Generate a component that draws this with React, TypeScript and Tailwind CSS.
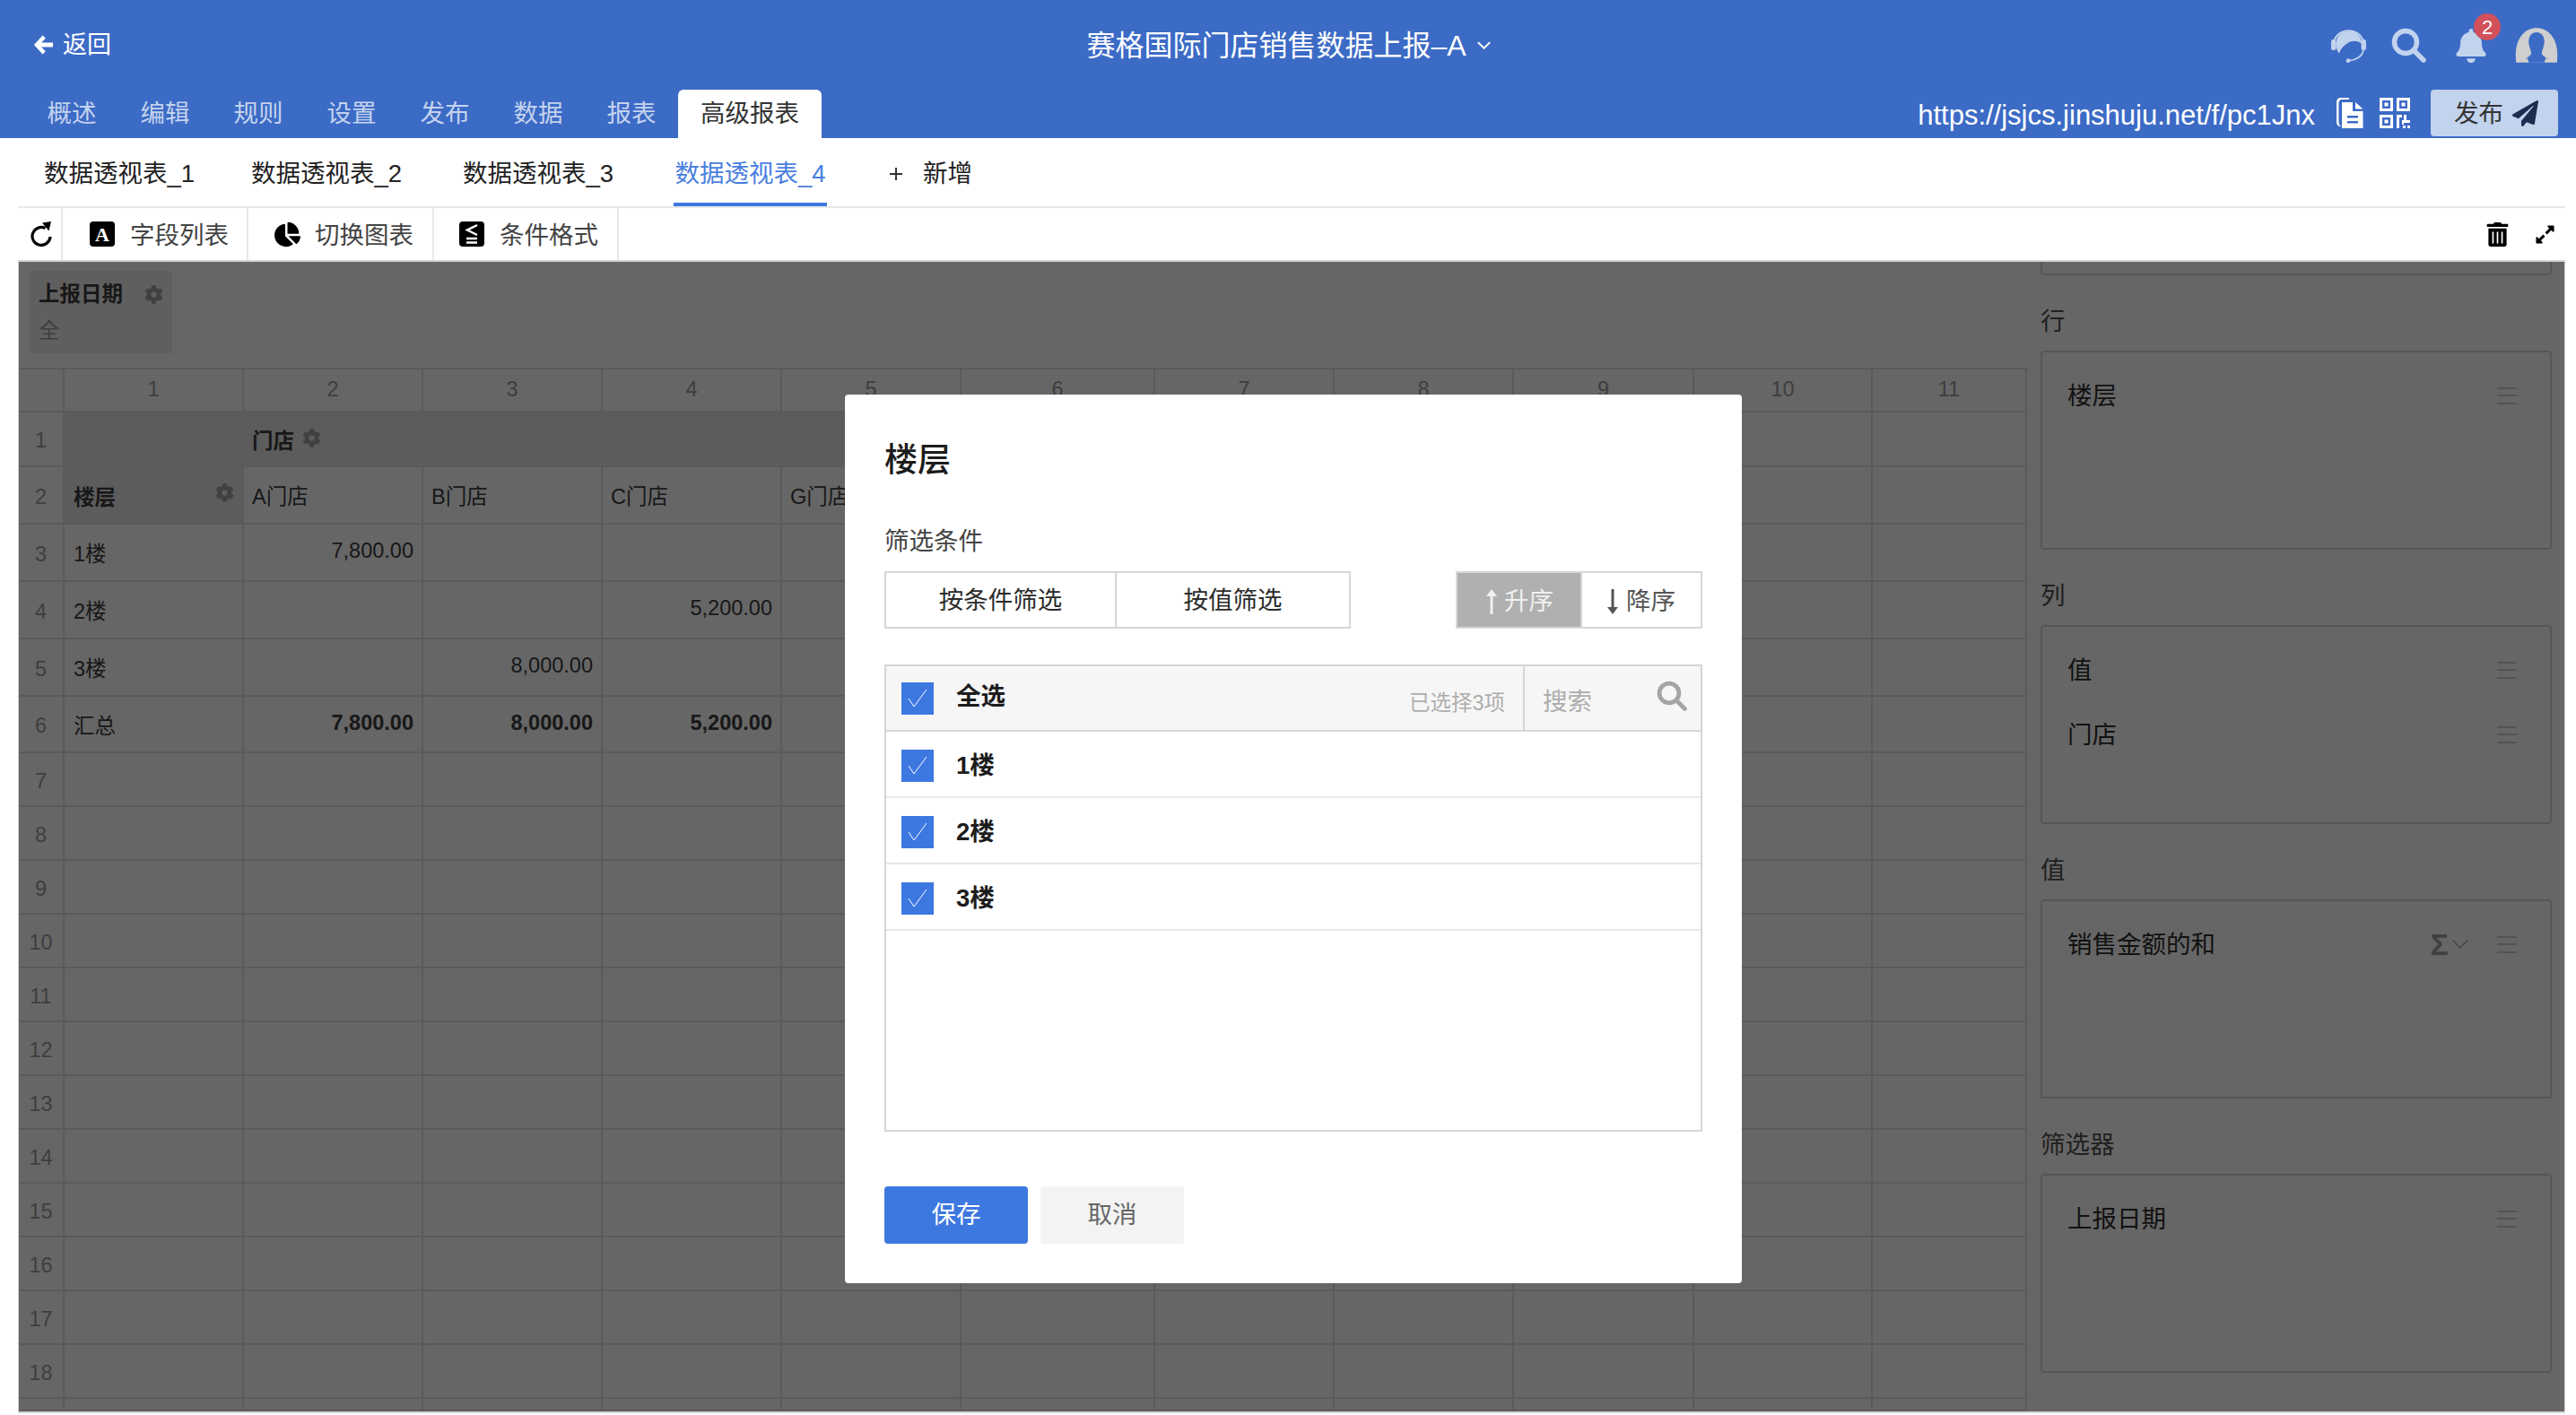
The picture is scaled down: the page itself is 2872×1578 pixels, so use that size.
import React from "react";
import { FaChartPie, FaTrashAlt, FaExpandAlt, FaBell, FaPaperPlane, FaCog } from "react-icons/fa";

const FONT = 'font-["Liberation_Sans","Noto_Sans_CJK_SC",sans-serif]';

function Magnifier({ className }: { className: string }) {
  return (
    <svg viewBox="0 0 39 39" className={className} fill="none" stroke="currentColor" strokeWidth="5.5" strokeLinecap="round">
      <circle cx="16" cy="16" r="12.5" />
      <line x1="25.5" y1="25.5" x2="36" y2="36" />
    </svg>
  );
}

function BackArrow() {
  return (
    <svg viewBox="0 0 24 24" className="w-[23px] h-[24px]" fill="#fff">
      <path d="M11 1 L1 12 L11 23 L14.5 19.5 L9.5 14.5 H23 V9.5 H9.5 L14.5 4.5 Z" />
    </svg>
  );
}

function Refresh() {
  return (
    <svg viewBox="0 0 24 28" className="w-[24px] h-[28px]">
      <path d="M16.5 7.5 A10 10 0 1 0 22 17" fill="none" stroke="#000" strokeWidth="3.2" />
      <path d="M13 1.5 L23 0 L20.5 10.5 Z" fill="#000" />
    </svg>
  );
}

function Headset() {
  return (
    <svg viewBox="0 0 115 115" className="w-[39px] h-[39px] text-[#c2d3ee]" fill="currentColor">
      <path d="M9 48 A49 45 0 0 1 106 48" fill="none" stroke="currentColor" strokeWidth="6" />
      <path d="M16 50 C18 22 40 12 58 12 C82 12 100 28 101 52 C88 42 70 40 54 50 C42 58 32 68 26 84 C18 74 14 62 16 50 Z" />
      <rect x="0" y="38" width="16" height="36" rx="7" />
      <rect x="99" y="38" width="16" height="36" rx="7" />
      <path d="M106 72 C104 94 82 106 60 108" fill="none" stroke="currentColor" strokeWidth="5" />
      <circle cx="56" cy="108" r="7" />
    </svg>
  );
}

function Avatar() {
  return (
    <svg viewBox="0 0 144 115" className="w-[48px] h-[39px]">
      <path d="M4 115 C-6 40 30 0 72 0 C114 0 150 40 140 115 Z" fill="#cfcfcf" />
      <path d="M72 14 C90 14 100 30 98 50 C96 66 90 74 90 84 C90 92 102 98 110 104 L102 102 L98 115 H46 L42 102 L34 104 C42 98 54 92 54 84 C54 74 48 66 46 50 C44 30 54 14 72 14 Z" fill="#3c6bc6" />
    </svg>
  );
}

function DocIcon() {
  return (
    <svg viewBox="0 0 30 34" className="w-[30px] h-[34px]" fill="white">
      <path d="M5 32 C2 32 0 30 0 27 V5 C0 2 2 0 5 0 H14 V2 H6 C4 2 2.5 3.5 2.5 6 V27 C2.5 29 3.5 31 5 32 Z" />
      <path fillRule="evenodd" d="M6 5 H18 V15 H29.5 V34 H6 Z M21 5 L29.5 12.5 H21 Z M12 20 V22.5 H24 V20 Z M12 26 V28.5 H24 V26 Z" />
    </svg>
  );
}

function QrIcon() {
  return (
    <svg viewBox="0 0 34 34" className="w-[34px] h-[34px]" fill="white">
      <path fillRule="evenodd" d="M0 0 H15 V15 H0 Z M3 3 V12 H12 V3 Z M5.5 5.5 H9.5 V9.5 H5.5 Z" />
      <path fillRule="evenodd" d="M19 0 H34 V15 H19 Z M22 3 V12 H31 V3 Z M24.5 5.5 H28.5 V9.5 H24.5 Z" />
      <path fillRule="evenodd" d="M0 19 H15 V34 H0 Z M3 22 V31 H12 V22 Z M5.5 24.5 H9.5 V28.5 H5.5 Z" />
      <path d="M19 19 H25 V22 H22 V34 H19 Z M27 19 H30 V25 H34 V19 H34 V28 H27 Z M25 25 H27 V30 H25 Z M26 31 H29 V34 H26 Z M31 31 H34 V34 H31 Z" />
    </svg>
  );
}

function AIcon() {
  return (
    <svg viewBox="0 0 28 28" className="w-[28px] h-[28px]">
      <rect width="28" height="28" rx="4" fill="#000" />
      <text x="14" y="22" textAnchor="middle" fill="#fff" fontSize="22" fontWeight="700" fontFamily="Liberation Serif, serif">A</text>
    </svg>
  );
}

function SIcon() {
  return (
    <svg viewBox="0 0 28 28" className="w-[28px] h-[28px]">
      <rect width="28" height="28" rx="4" fill="#000" />
      <path d="M20 4 L9 9.5 L20 15" fill="none" stroke="#fff" strokeWidth="2.5" />
      <path d="M8 19 H20 M8 23.5 H20" stroke="#fff" strokeWidth="2.5" />
    </svg>
  );
}

function Hamburger() {
  return (
    <div className="w-[22px] h-[19px] flex flex-col justify-between">
      <div className="h-[2px] bg-[#cfcfcf]" />
      <div className="h-[2px] bg-[#cfcfcf]" />
      <div className="h-[2px] bg-[#cfcfcf]" />
    </div>
  );
}

function Check() {
  return (
    <div className="w-[36px] h-[36px] bg-[#3d78e0] flex items-center justify-center">
      <svg viewBox="0 0 22 22" className="w-[22px] h-[22px]" fill="none" stroke="#fff" strokeWidth="1">
        <path d="M1 11 L7 20 L21 1" />
      </svg>
    </div>
  );
}

function Arrow({ down }: { down?: boolean }) {
  return (
    <svg viewBox="0 0 12 28" className="w-[12px] h-[28px]" fill="currentColor">
      {down ? <path d="M4.5 0 H7.5 V20 H12 L6 28 L0 20 H4.5 Z" /> : <path d="M4.5 28 H7.5 V8 H12 L6 0 L0 8 H4.5 Z" />}
    </svg>
  );
}

const tabs = ["概述", "编辑", "规则", "设置", "发布", "数据", "报表"];
const colW = "grid-cols-[51px_200px_200px_200px_200px_200px_216px_200px_200px_201px_199px_172px]";
const rowH = "grid-rows-[48px_61px_64px_64px_64px_64px_63px_repeat(12,60px)_14px]";
const line = "border-r-2 border-b-2 border-[#e2e2e2]";
const cols = [1, 2, 3, 4, 5, 6, 7, 8, 9, 10, 11];

const dataRows: { label: string; vals: string[]; bold?: boolean }[] = [
  { label: "1楼", vals: ["7,800.00", "", "", ""] },
  { label: "2楼", vals: ["", "", "5,200.00", ""] },
  { label: "3楼", vals: ["", "8,000.00", "", ""] },
  { label: "汇总", vals: ["7,800.00", "8,000.00", "5,200.00", ""], bold: true },
];

function RowNum({ n }: { n: number | string }) {
  return <div className={`${line} flex items-center justify-center pt-[5px] text-[#9c9c9c] text-[23.5px] leading-none`}>{n}</div>;
}

function Table() {
  return (
    <div className={`grid ${colW} ${rowH} flex-1 min-h-0 overflow-hidden text-[23.5px] text-[#3c3c3c]`}>
      <div className={line} />
      {cols.map((c) => (
        <div key={c} className={`${line} flex items-center justify-center text-[#9c9c9c] leading-none`}>{c}</div>
      ))}

      <RowNum n={1} />
      <div className="col-span-9 bg-[#e6e6e6] border-b-2 border-[#e2e2e2] flex items-center">
        <div className="ml-[209px] flex items-center gap-[9px] font-bold">
          <span className="leading-none mt-[7px]">门店</span>
          <FaCog className="w-[21px] h-[21px] text-[#a0a0a0] -mt-[3px]" />
        </div>
      </div>
      <div className={line} />
      <div className={line} />

      <RowNum n={2} />
      <div className={`${line} bg-[#e6e6e6] flex items-center justify-between pl-[10px] pr-[9px]`}>
        <span className="font-bold leading-none mt-[7px]">楼层</span>
        <FaCog className="w-[21px] h-[21px] text-[#a0a0a0] -mt-[5px]" />
      </div>
      {["A门店", "B门店", "C门店", "G门店"].map((t) => (
        <div key={t} className={`${line} flex items-center pl-[9px] pt-[6px]`}>{t}</div>
      ))}
      {cols.slice(5).map((c) => <div key={c} className={line} />)}

      {dataRows.map((r, i) => (
        <React.Fragment key={r.label}>
          <RowNum n={i + 3} />
          <div className={`${line} flex items-center pl-[10px] pt-[6px]`}>{r.label}</div>
          {r.vals.map((v, j) => (
            <div key={j} className={`${line} flex items-center justify-end pr-[9px] pb-[2px] ${r.bold ? "font-bold" : ""}`}>{v}</div>
          ))}
          {cols.slice(5).map((c) => <div key={c} className={line} />)}
        </React.Fragment>
      ))}

      {Array.from({ length: 13 }, (_, i) => i + 7).map((n) => (
        <React.Fragment key={n}>
          <RowNum n={n === 19 ? "" : n} />
          {cols.map((c) => <div key={c} className={line} />)}
        </React.Fragment>
      ))}
    </div>
  );
}

function PanelItem({ label, extra }: { label: string; extra?: boolean }) {
  return (
    <div className="h-[72px] flex items-center justify-between pr-[37px] text-[#2e2e2e]">
      <span className="leading-[36px] mt-[2px]">{label}</span>
      <div className="flex items-center gap-[32px]">
        {extra && (
          <div className="flex items-center gap-[4px] text-[#a0a0a0]">
            <span className="font-bold text-[34px] leading-none">Σ</span>
            <svg viewBox="0 0 18 10" className="w-[18px] h-[10px]" fill="none" stroke="currentColor" strokeWidth="1.2">
              <path d="M1 1 L9 9 L17 1" />
            </svg>
          </div>
        )}
        <Hamburger />
      </div>
    </div>
  );
}

function PanelGroup({ title, items }: { title: string; items: { label: string; extra?: boolean }[] }) {
  return (
    <div>
      <div className="pt-[34px] pb-[14px] leading-[36px] text-[#505050]">{title}</div>
      <div className="h-[222px] border-2 border-[#d8d8d8] rounded-[4px] pl-[28px] pt-[12px]">
        {items.map((it) => <PanelItem key={it.label} {...it} />)}
      </div>
    </div>
  );
}

function SidePanel() {
  return (
    <div className="w-[598px] shrink-0 pl-[14px] pr-[14px] text-[27.5px] overflow-hidden">
      <div className="h-[15px] border-2 border-t-0 border-[#d8d8d8] rounded-b-[4px]" />
      <PanelGroup title="行" items={[{ label: "楼层" }]} />
      <PanelGroup title="列" items={[{ label: "值" }, { label: "门店" }]} />
      <PanelGroup title="值" items={[{ label: "销售金额的和", extra: true }]} />
      <PanelGroup title="筛选器" items={[{ label: "上报日期" }]} />
    </div>
  );
}

function Modal() {
  return (
    <div className="absolute left-[921px] top-[148px] w-[1000px] h-[991px] bg-white rounded-[4px] px-[44px] pt-[50px] text-[27.5px] text-[#333]">
      <div className="text-[37px] leading-[48px] font-medium text-[#1c1c1c]">楼层</div>
      <div className="mt-[48px] leading-[36px] text-[#444]">筛选条件</div>
      <div className="mt-[15px] flex justify-between h-[64px]">
        <div className="w-[520px] border-2 border-[#d6d6d6] flex text-[#2a2a2a]">
          <div className="w-[257px] border-r-2 border-[#d6d6d6] flex items-center justify-center pt-[2px]">按条件筛选</div>
          <div className="flex-1 flex items-center justify-center pt-[2px]">按值筛选</div>
        </div>
        <div className="w-[275px] border-2 border-[#d6d6d6] flex">
          <div className="w-[137px] bg-[#b0b0b0] text-[#f0f0f0] flex items-center justify-center gap-[8px] pt-[4px] pl-[2px]">
            <Arrow />
            <span>升序</span>
          </div>
          <div className="flex-1 text-[#555] flex items-center justify-center gap-[9px] pt-[4px] border-l-2 border-[#d6d6d6]">
            <Arrow down />
            <span>降序</span>
          </div>
        </div>
      </div>
      <div className="mt-[40px] h-[521px] border-2 border-[#d6d6d6]">
        <div className="h-[73px] bg-[#f6f6f6] border-b-2 border-[#d6d6d6] flex">
          <div className="flex-1 flex items-center pl-[17px] pr-[20px]">
            <Check />
            <span className="ml-[25px] font-bold text-[#1c1c1c] -mt-[3px]">全选</span>
            <span className="ml-auto mt-[12px] text-[23.5px] text-[#adadad]">已选择3项</span>
          </div>
          <div className="w-[198px] border-l-2 border-[#d6d6d6] flex items-center justify-between pl-[20px] pr-[15px]">
            <span className="text-[#adadad] mt-[8px]">搜索</span>
            <Magnifier className="w-[34px] h-[34px] text-[#a5a5a5] -mt-[6px]" />
          </div>
        </div>
        {["1楼", "2楼", "3楼"].map((t) => (
          <div key={t} className="h-[74px] border-b-2 border-[#e8e8e8] flex items-center pl-[17px] pt-[3px]">
            <Check />
            <span className="ml-[25px] font-bold text-[#1c1c1c]">{t}</span>
          </div>
        ))}
      </div>
      <div className="mt-[61px] flex gap-[14px]">
        <div className="w-[160px] h-[64px] bg-[#3d78e0] text-white rounded-[4px] flex items-center justify-center">保存</div>
        <div className="w-[160px] h-[64px] bg-[#f3f3f3] text-[#666] rounded-[4px] flex items-center justify-center">取消</div>
      </div>
    </div>
  );
}

export default function App() {
  return (
    <div className={`${FONT} w-[2872px] h-[1578px] bg-white overflow-hidden flex flex-col`}>
      <header className="h-[154px] shrink-0 bg-[#3c6bc6] flex flex-col">
        <div className="h-[100px] flex items-center">
          <div className="flex-1 flex items-center pl-[37px] gap-[10px] text-white text-[27px]">
            <BackArrow />
            <span>返回</span>
          </div>
          <div className="mr-[16px] flex items-center text-white text-[32px] gap-[12px] pt-[1px]">
            <span>赛格国际门店销售数据上报–A</span>
            <svg viewBox="0 0 16 9" className="w-[15px] h-[9px]" fill="none" stroke="#fff" strokeWidth="2">
              <path d="M1 1 L8 8 L15 1" />
            </svg>
          </div>
          <div className="flex-1 flex items-center justify-end pr-[20px]">
            <Headset />
            <Magnifier className="ml-[28px] w-[39px] h-[39px] text-[#c2d3ee]" />
            <div className="relative ml-[31px] mt-[2px]">
              <FaBell className="w-[38px] h-[38px] text-[#c2d3ee]" />
              <div className="absolute -right-[14px] -top-[17px] w-[30px] h-[30px] rounded-full bg-[#d1505a] text-white text-[22px] flex items-center justify-center">2</div>
            </div>
            <div className="ml-[30px]"><Avatar /></div>
          </div>
        </div>
        <div className="h-[54px] flex justify-between pl-[28px] pr-[20px]">
          <div className="flex text-[27.5px] text-[#c4d3ee]">
            {tabs.map((t) => (
              <div key={t} className="w-[104px] flex items-center justify-center">{t}</div>
            ))}
            <div className="w-[160px] bg-white text-[#333] rounded-t-[6px] flex items-center justify-center">高级报表</div>
          </div>
          <div className="flex items-start">
            <span className="text-white text-[31px] leading-[36px] mt-[11px]">https://jsjcs.jinshuju.net/f/pc1Jnx</span>
            <div className="ml-[24px] mt-[9px]"><DocIcon /></div>
            <div className="ml-[18px] mt-[9px]"><QrIcon /></div>
            <div className="ml-[23px] w-[142px] h-[52px] bg-[#c2d3ee] rounded-[4px] flex items-center pl-[26px] gap-[10px] text-[27.5px] text-[#333]">
              <span className="mt-[2px]">发布</span>
              <FaPaperPlane className="w-[29px] h-[29px] text-[#1c2d50]" />
            </div>
          </div>
        </div>
      </header>

      <nav className="ml-[20px] mr-[12px] h-[78px] shrink-0 border-b-2 border-[#e8e8e8] flex pl-[29px] text-[27.5px] text-[#222]">
        <div className="w-[231px] flex items-center pt-[3px]">数据透视表_1</div>
        <div className="w-[236px] flex items-center pt-[3px]">数据透视表_2</div>
        <div className="w-[235px] flex items-center pt-[3px]">数据透视表_3</div>
        <div className="w-[171px] mr-[69px] flex items-center justify-center pt-[7px] border-b-4 border-[#3d78e0] text-[#4a7fe0] whitespace-nowrap">数据透视表_4</div>
        <div className="flex items-center gap-[22px] pt-[3px]">
          <svg viewBox="0 0 16 16" className="w-[16px] h-[16px]" stroke="#333" strokeWidth="2"><path d="M8 1 V15 M1 8 H15" /></svg>
          <span>新增</span>
        </div>
      </nav>

      <div className="ml-[20px] mr-[12px] h-[58px] shrink-0 flex items-center justify-between text-[27.5px] text-[#444]">
        <div className="flex h-full">
          <div className="w-[50px] border-r-2 border-[#e8e8e8] flex items-center justify-center pl-[4px]">
            <Refresh />
          </div>
          <div className="w-[207px] border-r-2 border-[#e8e8e8] flex items-center pl-[30px] gap-[17px]"><AIcon /><span className="mt-[3px]">字段列表</span></div>
          <div className="w-[207px] border-r-2 border-[#e8e8e8] flex items-center pl-[29px] gap-[16px]"><FaChartPie className="w-[29px] h-[29px] text-black" /><span className="mt-[3px]">切换图表</span></div>
          <div className="w-[206px] border-r-2 border-[#e8e8e8] flex items-center pl-[28px] gap-[17px]"><SIcon /><span className="mt-[3px]">条件格式</span></div>
        </div>
        <div className="flex items-center pr-[11px] gap-[29px] text-black">
          <FaTrashAlt className="w-[25px] h-[27px]" />
          <FaExpandAlt className="w-[23px] h-[23px]" />
        </div>
      </div>

      <main className="relative ml-[20px] w-[2840px] h-[1286px] shrink-0 border-t-2 border-b-2 border-x border-[#d4d4d4] flex">
        <div className="w-[2240px] shrink-0 flex flex-col">
          <div className="h-[120px] shrink-0 border-b-2 border-[#e0e0e0] pl-[11px] pt-[10px]">
            <div className="w-[160px] h-[92px] bg-[#eeeeee] pl-[11px] pt-[10px]">
              <div className="flex items-center justify-between pr-[10px]">
                <span className="font-bold text-[23.5px] leading-[32px] text-[#3c3c3c]">上报日期</span>
                <FaCog className="w-[21px] h-[21px] text-[#a0a0a0]" />
              </div>
              <div className="mt-[9px] text-[23.5px] leading-[32px] text-[#9c9c9c]">全</div>
            </div>
          </div>
          <Table />
        </div>
        <SidePanel />
        <div className="absolute inset-0 bg-black/60" />
        <Modal />
      </main>
    </div>
  );
}
